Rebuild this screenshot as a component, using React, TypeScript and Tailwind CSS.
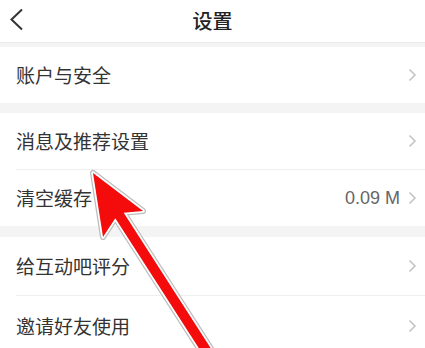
const font = "font-['Noto_Sans_CJK_SC','Noto_Sans',sans-serif]"

function Chevron() {
  return (
    <svg width="9" height="14" viewBox="0 0 9 14" className="shrink-0">
      <polyline points="1.5,1.5 7,7 1.5,12.5" fill="none" stroke="#c4c4c4" strokeWidth="1.6" />
    </svg>
  )
}

function Row({
  label,
  value,
  height,
  divider,
}: {
  label: string
  value?: string
  height: string
  divider?: boolean
}) {
  return (
    <div className={`flex bg-white pl-4 ${height}`}>
      <div
        className={`flex flex-1 items-center justify-between pr-[8px] ${divider ? "border-b border-[#efefef]" : ""}`}
      >
        <span className="text-[19px] text-[#333]">{label}</span>
        <div className="flex items-center gap-[8px]">
          {value && (
            <span className="font-['Liberation_Sans',sans-serif] text-[18px] text-[#666]">{value}</span>
          )}
          <Chevron />
        </div>
      </div>
    </div>
  )
}

function Arrow() {
  const pts = "93,173 103,237 115.3,218.2 223.3,386.2 231.7,380.8 123.7,212.8 143,211"
  return (
    <svg className="pointer-events-none absolute inset-0" width="425" height="348" viewBox="0 0 425 348">
      <polygon points={pts} fill="none" stroke="#bdbdbd" strokeWidth="6" strokeLinejoin="round" />
      <polygon points={pts} fill="none" stroke="#ffffff" strokeWidth="3.5" strokeLinejoin="round" />
      <polygon points={pts} fill="#f40b0b" />
    </svg>
  )
}

export default function App() {
  return (
    <div className={`relative h-[348px] w-[425px] overflow-hidden bg-[#f4f4f4] ${font}`}>
      <header className="relative flex h-[43px] items-center justify-center border-b border-[#ececec] bg-white">
        <svg className="absolute left-[9px] top-[8px]" width="16" height="24" viewBox="0 0 16 24">
          <polyline points="13,1.5 2.5,11.5 13,21.5" fill="none" stroke="#333" strokeWidth="2" />
        </svg>
        <h1 className="text-[20px] font-medium text-[#222]">设置</h1>
      </header>
      <div className="mt-[4px] flex flex-col">
        <Row label="账户与安全" height="h-[56px]" />
        <div className="h-[10px]" />
        <Row label="消息及推荐设置" height="h-[57px]" divider />
        <Row label="清空缓存" value="0.09 M" height="h-[56px]" />
        <div className="h-[11px]" />
        <Row label="给互动吧评分" height="h-[59px]" divider />
        <Row label="邀请好友使用" height="h-[60px]" />
      </div>
      <Arrow />
    </div>
  )
}
